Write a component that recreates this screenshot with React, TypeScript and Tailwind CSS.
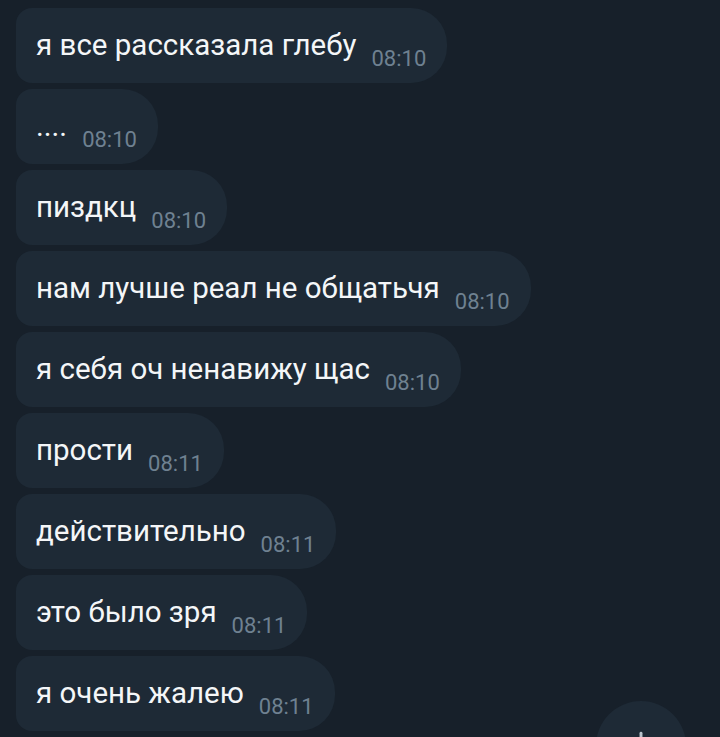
import { ArrowDown } from 'lucide-react';

const messages = [
  { text: 'я все рассказала глебу', time: '08:10' },
  { text: '....', time: '08:10' },
  { text: 'пиздкц', time: '08:10' },
  { text: 'нам лучше реал не общатьчя', time: '08:10' },
  { text: 'я себя оч ненавижу щас', time: '08:10' },
  { text: 'прости', time: '08:11' },
  { text: 'действительно', time: '08:11' },
  { text: 'это было зря', time: '08:11' },
  { text: 'я очень жалею', time: '08:11' },
];

function Bubble({ text, time }: { text: string; time: string }) {
  return (
    <div className="flex h-[75px] w-fit items-baseline gap-[15px] rounded-l-[16px] rounded-r-[36px] bg-[#1e2a36] pl-5 pr-[21px] pt-5">
      <span className="text-[29.5px] leading-[34px] text-[#f4f6f8]">{text}</span>
      <span className="translate-y-[11px] text-[22px] leading-[24px] text-[#6f8191]">{time}</span>
    </div>
  );
}

export default function App() {
  return (
    <div
      className="relative h-[737px] w-full overflow-hidden bg-[#17202a]"
      style={{ fontFamily: 'Roboto, "Noto Sans", sans-serif' }}
    >
      {/* Messages */}
      <div className="flex flex-col gap-[6px] pl-4 pt-2">
        {messages.map((m, i) => (
          <Bubble key={i} text={m.text} time={m.time} />
        ))}
      </div>

      {/* Scroll-down button */}
      <div className="absolute left-[596px] top-[701px] flex h-[90px] w-[90px] items-center justify-center rounded-full bg-[#1e2a36]">
        <ArrowDown className="h-11 w-11 text-[#b9c3cc]" strokeWidth={1.6} />
      </div>
    </div>
  );
}
